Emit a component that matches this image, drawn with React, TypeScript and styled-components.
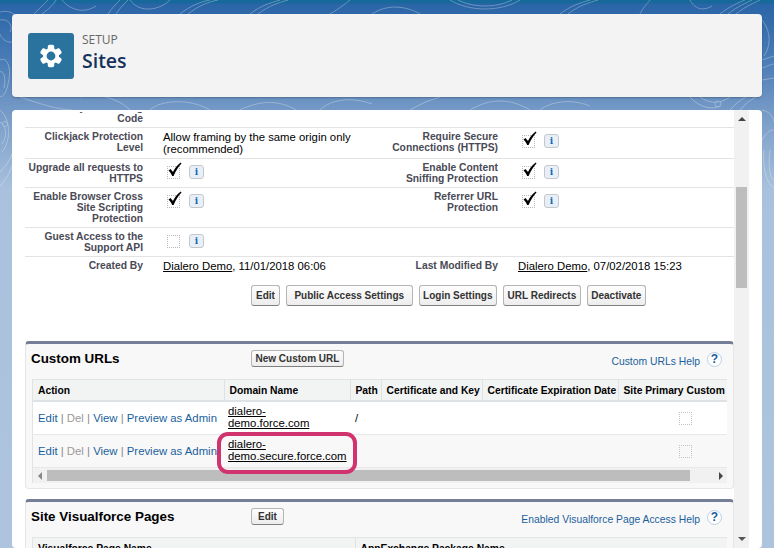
import styled, { createGlobalStyle } from "styled-components"

const GlobalStyle = createGlobalStyle`
  html, body {
    margin: 0;
    padding: 0;
    height: 548px;
    overflow: hidden;
    font-family: "Liberation Sans", Arial, sans-serif;
  }
`

const Page = styled.div`
  position: relative;
  height: 548px;
  padding: 14px 12px 0;
  box-sizing: border-box;
  overflow: hidden;
  background: linear-gradient(180deg, #16699a 0, #16699a 3px, #2a65a7 4px, #4a7cb6 60px, #7499c6 110px, #a9c1dd 190px, #aec4de 100%);
`

const Contours = styled.svg`
  position: absolute;
  top: 0;
  left: 0;
  width: 774px;
  height: 200px;
  fill: none;
  stroke: #fff;
  stroke-width: 1;
  opacity: 0.3;
`

const Header = styled.header`
  position: relative;
  display: flex;
  align-items: center;
  gap: 8px;
  height: 83px;
  padding-left: 16px;
  box-sizing: border-box;
  margin-bottom: 13px;
  background: #f3f3f3;
  border-radius: 4px;
  box-shadow: 0 1px 2px rgba(0, 0, 0, 0.25);
`

const HeaderIcon = styled.div`
  display: flex;
  align-items: center;
  justify-content: center;
  width: 46px;
  height: 46px;
  border-radius: 3px;
  background: #2a739e;
`

const HeaderTitles = styled.div`
  padding-bottom: 6px;
  font-family: "Open Sans", sans-serif;
`

const Eyebrow = styled.div`
  font-size: 12px;
  line-height: 16px;
  color: #666;
`

const Title = styled.h1`
  margin: 0;
  font-size: 19.5px;
  line-height: 26px;
  font-weight: 600;
  color: #16325c;
`

const Card = styled.main`
  position: relative;
  display: flex;
  height: 438px;
  padding: 0 13px;
  box-sizing: border-box;
  background: #fff;
  border-radius: 4px;
  overflow: hidden;
`

const ContentClip = styled.div`
  flex: none;
  width: 709px;
  margin-top: 2px;
  overflow: hidden;
`

const Content = styled.div`
  margin-top: -13px;
`

const DetailRow = styled.div<{ $plain?: boolean }>`
  display: grid;
  grid-template-columns: 118px 210px 145px 1fr;
  padding: 3px 0;
  border-bottom: ${(p) => (p.$plain ? "none" : "1px solid #e3e3e3")};
`

const Label = styled.div<{ $inset?: boolean }>`
  padding-left: ${(p) => (p.$inset ? "33px" : "0")};
  font-size: 10.3px;
  line-height: 11px;
  font-weight: bold;
  color: #4a4a56;
  text-align: right;
`

const Value = styled.div`
  padding-left: 20px;
  font-size: 11.33px;
  line-height: 12px;
  color: #000;
`

const Flags = styled.div`
  display: flex;
  align-items: flex-start;
  gap: 9px;
  padding: 3px 0 0 24px;
`

const CheckBox = styled.span`
  position: relative;
  display: block;
  width: 11px;
  height: 11px;
  margin-top: 1px;
  border: 1px dotted #b9b9b9;
`

const CheckMark = styled.svg`
  position: absolute;
  left: 0;
  top: -5px;
  width: 14px;
  height: 15px;
  fill: #000;
`

const InfoButton = styled.span`
  display: block;
  width: 13px;
  height: 12px;
  border: 1px solid #c4c8cc;
  border-radius: 3px;
  background: #e8eff6;
  font-family: "DejaVu Serif", serif;
  font-size: 9px;
  font-weight: bold;
  line-height: 12px;
  text-align: center;
  color: #1468b8;
`

const UserLink = styled.a`
  color: #000;
  text-decoration: underline;
`

const Actions = styled.div`
  display: flex;
  gap: 6px;
  padding: 10px 0 0 226px;
  margin-bottom: 35px;
`

const Button = styled.button<{ $pad?: number; $small?: boolean }>`
  height: ${(p) => (p.$small ? "17px" : "21px")};
  margin-top: ${(p) => (p.$small ? "-6px" : "0")};
  padding: 0 ${(p) => p.$pad ?? 3.5}px;
  border: 1px solid #b5b5b5;
  border-bottom-color: #7f7f7f;
  border-radius: 3px;
  background: linear-gradient(180deg, #fdfdfd, #ededed);
  font-family: inherit;
  font-size: 10px;
  font-weight: bold;
  color: #333;
  white-space: nowrap;
`

const Section = styled.section`
  margin-bottom: 10px;
  padding: 0 6px 5px;
  border: 1px solid #e6e6e6;
  border-top: 3px solid #747e96;
  border-radius: 4px;
  background: #f8f8f8;
`

const SectionHead = styled.div`
  display: flex;
  align-items: center;
  height: 35px;
`

const SectionTitle = styled.h2`
  width: 220px;
  margin: -6px 0 0 -1px;
  font-size: 13.4px;
  font-weight: bold;
  color: #000;
`

const HelpLink = styled.a`
  margin: -1px 0 0 auto;
  font-size: 10.35px;
  color: #1a5f9c;
`

const HelpIcon = styled.span`
  display: block;
  width: 13px;
  height: 13px;
  margin: -5px 5px 0 7px;
  border-radius: 50%;
  border: 1px solid #b9cfe6;
  background: #fff;
  font-size: 12px;
  font-weight: bold;
  line-height: 13px;
  text-align: center;
  color: #1a5f9c;
`

const TableWrap = styled.div`
  position: relative;
  border: 1px solid #e3e3e3;
  border-right: none;
  border-bottom: none;
`

const Table = styled.table`
  width: 694px;
  table-layout: fixed;
  border-collapse: collapse;
`

const Th = styled.th`
  height: 20px;
  padding: 0 5px;
  overflow: hidden;
  border-right: 1px solid #dfe2e4;
  border-bottom: 2px solid #dfe2e4;
  background: #f2f3f3;
  font-size: 10.3px;
  font-weight: bold;
  text-align: left;
  white-space: nowrap;
  color: #000;

  &:last-child {
    border-right: none;
  }
`

const Tr = styled.tr<{ $alt?: boolean }>`
  background: ${(p) => (p.$alt ? "#f8f8f8" : "#fff")};
`

const Td = styled.td`
  height: 32px;
  padding: 0 4px 0 5px;
  border-bottom: 1px solid #e8e8e8;
  font-size: 11.35px;
  line-height: 12px;
  overflow: hidden;
  white-space: nowrap;
`

const DomainCell = styled(Td)`
  height: 29px;
  padding: 3px 4px 0;
  vertical-align: top;
  white-space: normal;
`

const RowLink = styled.a<{ $muted?: boolean }>`
  color: ${(p) => (p.$muted ? "#9a9a9a" : "#1a5f9c")};
`

const Sep = styled.span`
  color: #888;
`

const CenterBox = styled.span`
  display: block;
  width: 11px;
  height: 11px;
  margin-left: 56px;
  border: 1px dotted #c4c4c4;
`

const HScroll = styled.div`
  display: flex;
  align-items: center;
  height: 15px;
  background: #f1f1f1;
`

const ArrowLeft = styled.span`
  width: 0;
  height: 0;
  margin: 0 5px 0 5px;
  border: 4px solid transparent;
  border-left: none;
  border-right: 4px solid #888;
`

const ArrowRight = styled.span`
  width: 0;
  height: 0;
  margin: 0 4px 0 auto;
  border: 4px solid transparent;
  border-right: none;
  border-left: 4px solid #444;
`

const HThumb = styled.span`
  width: 643px;
  height: 11px;
  background: #bdbdbd;
`

const Highlight = styled.div`
  position: absolute;
  left: 184px;
  top: 52px;
  width: 132px;
  height: 34px;
  border: 4px solid #d1336e;
  border-radius: 11px;
`

const VScroll = styled.div`
  display: flex;
  flex-direction: column;
  align-items: center;
  flex: none;
  width: 15px;
  background: #f1f1f1;
`

const ArrowUp = styled.span`
  width: 0;
  height: 0;
  margin-top: 7px;
  border: 4px solid transparent;
  border-top: none;
  border-bottom: 4px solid #444;
`

const ArrowDown = styled.span`
  width: 0;
  height: 0;
  margin: auto 0 7px;
  border: 4px solid transparent;
  border-bottom: none;
  border-top: 4px solid #555;
`

const VThumb = styled.span`
  width: 11px;
  height: 101px;
  margin-top: 66px;
  background: #bdbdbd;
`

const Gear = () => (
  <svg width="24" height="24" viewBox="0 0 24 24">
    {[0, 60, 120, 180, 240, 300].map((a) => (
      <rect key={a} x="8.8" y="0.8" width="6.4" height="6" rx="1.8" fill="#fff" transform={`rotate(${a} 12 12)`} />
    ))}
    <circle cx="12" cy="12" r="6.2" fill="none" stroke="#fff" strokeWidth="3.6" />
  </svg>
)

const Flag = ({ checked }: { checked?: boolean }) => (
  <Flags>
    <CheckBox>
      {checked && (
        <CheckMark viewBox="0 0 14 15">
          <path d="M0.5 8.5 L2.5 7 L5 10 C6.8 6.2 9.2 3 12.8 0.5 L13.5 1.5 C10.5 4.6 7.8 8.6 5.6 14 L4.2 14 C3.4 12 2 10 0.5 8.5 Z" />
        </CheckMark>
      )}
    </CheckBox>
    <InfoButton>i</InfoButton>
  </Flags>
)

const RowActions = () => (
  <>
    <RowLink>Edit</RowLink> <Sep>|</Sep> <RowLink $muted>Del</RowLink> <Sep>|</Sep> <RowLink>View</RowLink> <Sep>|</Sep>{" "}
    <RowLink>Preview as Admin</RowLink>
  </>
)

export default function App() {
  return (
    <>
      <GlobalStyle />
      <Page>
        <Contours viewBox="0 0 774 200">
          <path d="M0 12 C14 8 26 22 18 36 C12 48 2 40 0 34 M0 20 C8 18 14 26 10 32" />
          <path d="M34 14 C42 6 46 2 48 0 M42 14 C50 8 54 4 56 0 M108 14 C112 8 116 4 120 0 M116 14 C120 8 124 4 128 0" />
          <path d="M62 0 C70 10 84 14 96 6 M130 0 C140 14 160 10 170 0 M180 14 C190 6 200 2 210 0 M188 14 C198 6 208 2 218 0" />
          <path d="M250 14 C260 6 270 3 280 0 M258 14 C268 6 278 3 288 0 M330 14 C340 8 345 4 350 0 M372 14 C390 2 410 8 420 14" />
          <path d="M450 0 C470 12 500 12 520 0 M458 0 C474 8 496 8 512 0 M560 14 C570 6 580 3 590 0 M568 14 C578 6 588 3 598 0 M640 14 C644 6 648 3 650 0" />
          <path d="M690 0 C694 8 702 12 712 6 M720 14 C730 6 738 3 745 0 M728 14 C738 6 746 3 752 0 M736 14 C746 6 754 3 760 0" />
          <path d="M762 20 C770 30 772 44 764 56 M762 60 L774 56 M762 68 C768 66 772 64 774 64 M762 80 L774 78" />
          <path d="M0 60 C8 56 12 70 8 84 C6 94 2 98 0 96 M0 72 C4 70 6 78 4 88" />
          <path d="M0 110 C10 118 12 140 2 152 M0 122 C6 126 8 136 2 144 M0 172 C6 166 10 160 12 154 M0 186 C6 180 10 172 12 166" />
          <circle cx="5" cy="124" r="2.5" />
          <path d="M20 97 C40 104 60 110 72 110 M80 97 C100 92 120 100 130 110 M150 110 C160 100 190 98 210 110" />
          <path d="M240 110 C260 100 280 100 296 110 M320 110 C330 100 350 96 372 104 M410 110 C420 104 430 100 440 97" />
          <path d="M470 110 C490 98 510 98 530 110 M540 110 C550 102 570 98 590 106 M690 97 C700 108 712 110 720 106" />
          <path d="M700 97 C710 104 720 104 730 97 M730 110 C735 104 740 100 746 97 M740 110 C745 104 750 100 756 97" />
          <circle cx="718" cy="104" r="3" />
          <path d="M762 110 C772 112 774 120 774 122 M762 140 C768 130 772 130 774 130 M764 150 C762 170 768 185 774 188 M770 150 C768 165 770 178 774 180" />
        </Contours>
        <Header>
          <HeaderIcon>
            <Gear />
          </HeaderIcon>
          <HeaderTitles>
            <Eyebrow>SETUP</Eyebrow>
            <Title>Sites</Title>
          </HeaderTitles>
        </Header>
        <Card>
          <ContentClip>
            <Content>
              <DetailRow>
                <Label>Secure by Confirming Code</Label>
              </DetailRow>
              <DetailRow>
                <Label>Clickjack Protection Level</Label>
                <Value>Allow framing by the same origin only (recommended)</Value>
                <Label $inset>Require Secure Connections (HTTPS)</Label>
                <Flag checked />
              </DetailRow>
              <DetailRow>
                <Label>Upgrade all requests to HTTPS</Label>
                <Flag checked />
                <Label $inset>Enable Content Sniffing Protection</Label>
                <Flag checked />
              </DetailRow>
              <DetailRow>
                <Label>Enable Browser Cross Site Scripting Protection</Label>
                <Flag checked />
                <Label $inset>Referrer URL Protection</Label>
                <Flag checked />
              </DetailRow>
              <DetailRow>
                <Label>Guest Access to the Support API</Label>
                <Flag />
              </DetailRow>
              <DetailRow $plain>
                <Label>Created By</Label>
                <Value>
                  <UserLink>Dialero Demo</UserLink>, 11/01/2018 06:06
                </Value>
                <Label>Last Modified By</Label>
                <Value>
                  <UserLink>Dialero Demo</UserLink>, 07/02/2018 15:23
                </Value>
              </DetailRow>
              <Actions>
                <Button $pad={4}>Edit</Button>
                <Button $pad={7.5}>Public Access Settings</Button>
                <Button>Login Settings</Button>
                <Button>URL Redirects</Button>
                <Button>Deactivate</Button>
              </Actions>

              <Section>
                <SectionHead>
                  <SectionTitle>Custom URLs</SectionTitle>
                  <Button $small $pad={3.5}>New Custom URL</Button>
                  <HelpLink>Custom URLs Help</HelpLink>
                  <HelpIcon>?</HelpIcon>
                </SectionHead>
                <TableWrap>
                  <Table>
                    <colgroup>
                      <col width="191" />
                      <col width="126" />
                      <col width="31" />
                      <col width="101" />
                      <col width="136" />
                      <col width="109" />
                    </colgroup>
                    <thead>
                      <tr>
                        <Th>Action</Th>
                        <Th>Domain Name</Th>
                        <Th>Path</Th>
                        <Th>Certificate and Key</Th>
                        <Th>Certificate Expiration Date</Th>
                        <Th>Site Primary Custom</Th>
                      </tr>
                    </thead>
                    <tbody>
                      <Tr>
                        <Td>
                          <RowActions />
                        </Td>
                        <DomainCell>
                          <UserLink>dialero-demo.force.com</UserLink>
                        </DomainCell>
                        <Td>/</Td>
                        <Td />
                        <Td />
                        <Td>
                          <CenterBox />
                        </Td>
                      </Tr>
                      <Tr $alt>
                        <Td>
                          <RowActions />
                        </Td>
                        <DomainCell>
                          <UserLink>dialero-demo.secure.force.com</UserLink>
                        </DomainCell>
                        <Td />
                        <Td />
                        <Td />
                        <Td>
                          <CenterBox />
                        </Td>
                      </Tr>
                    </tbody>
                  </Table>
                  <HScroll>
                    <ArrowLeft />
                    <HThumb />
                    <ArrowRight />
                  </HScroll>
                  <Highlight />
                </TableWrap>
              </Section>

              <Section>
                <SectionHead>
                  <SectionTitle>Site Visualforce Pages</SectionTitle>
                  <Button $small $pad={6}>Edit</Button>
                  <HelpLink>Enabled Visualforce Page Access Help</HelpLink>
                  <HelpIcon>?</HelpIcon>
                </SectionHead>
                <TableWrap>
                  <Table>
                    <colgroup>
                      <col width="322" />
                      <col />
                    </colgroup>
                    <thead>
                      <tr>
                        <Th>Visualforce Page Name</Th>
                        <Th>AppExchange Package Name</Th>
                      </tr>
                    </thead>
                  </Table>
                </TableWrap>
              </Section>
            </Content>
          </ContentClip>
          <VScroll>
            <ArrowUp />
            <VThumb />
            <ArrowDown />
          </VScroll>
        </Card>
      </Page>
    </>
  )
}
